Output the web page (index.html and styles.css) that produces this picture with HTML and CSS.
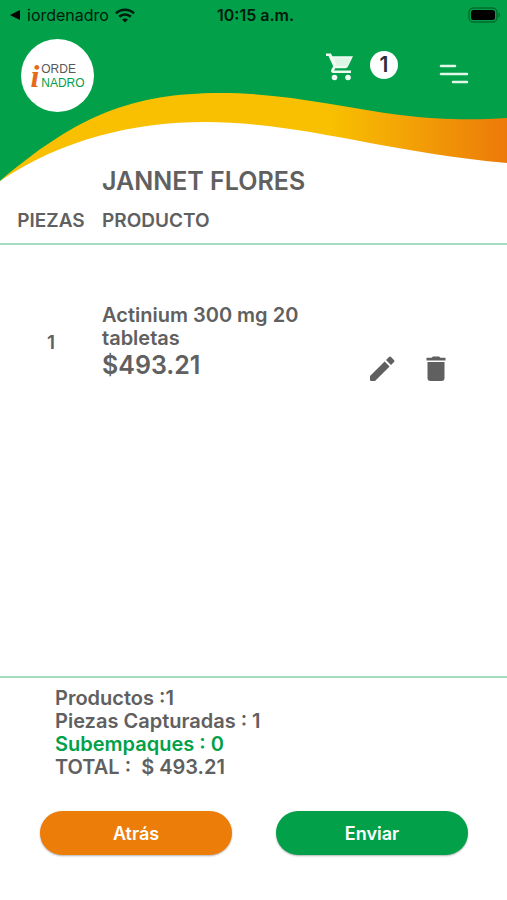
FILE: index.html
```html
<!DOCTYPE html>
<html lang="es">
<head>
<meta charset="utf-8">
<meta name="viewport" content="width=device-width, initial-scale=1">
<title>iordenadro</title>
<link rel="stylesheet" href="styles.css">
</head>
<body>
<header class="header">
  <svg class="wave" viewBox="0 0 507 182" preserveAspectRatio="none" aria-hidden="true">
    <defs>
      <linearGradient id="band" gradientUnits="userSpaceOnUse" x1="0" y1="0" x2="507" y2="0">
        <stop offset="0" stop-color="#f8c000"/>
        <stop offset=".65" stop-color="#f8c000"/>
        <stop offset=".8" stop-color="#f3a306"/>
        <stop offset="1" stop-color="#ec7a09"/>
      </linearGradient>
    </defs>
    <path fill="url(#band)" d="M0 181C62 139 135 122 205 122C301 122 384 152 507 163V80H0Z"/>
    <path fill="#02a149" d="M0 0H507V118C474 120 440 120 400 115C340 107 285 93 220 93C130 93 83 119 35 153C23 162 10 172 0 181Z"/>
  </svg>
  <div class="status">
    <div class="status-back">
      <svg width="11" height="12" viewBox="0 0 11 12" aria-hidden="true"><path d="M0 6L10 1V11Z"/></svg>
      <span>iordenadro</span>
      <svg width="20" height="15" viewBox="0 0 20 15" fill="none" stroke="#001c0c" stroke-width="2.6" aria-hidden="true"><path d="M1 5.4C6 .6 14 .6 19 5.4"/><path d="M4.2 8.8C7.5 5.7 12.5 5.7 15.8 8.8"/><path d="M10 14.5L7 11.5C8.6 10 11.4 10 13 11.5Z" fill="#001c0c" stroke="none"/></svg>
    </div>
    <time class="status-time">10:15 a.m.</time>
    <svg class="battery" width="33" height="16" viewBox="0 0 33 16" aria-hidden="true"><rect x="1" y="1" width="28" height="14" rx="4.5" fill="none" stroke="#006c2f" stroke-width="1.4"/><rect x="3" y="3" width="24" height="10" rx="2.5"/><path d="M30.5 5.5C32.5 6.2 32.5 9.8 30.5 10.5Z" fill="#006c2f"/></svg>
  </div>
  <div class="bar">
    <a class="logo" href="#" aria-label="iOrdenadro">
      <span class="logo-i">i</span>
      <span class="logo-words"><span>ORDE</span><span class="logo-green">NADRO</span></span>
    </a>
    <button class="cart" type="button" aria-label="Carrito">
      <svg width="28" height="28" viewBox="0 0 28 28" fill="#effaf2" aria-hidden="true"><path d="M0 .5H5L6.3 3.2H27L22 13.5Q21.2 15.2 19.5 15.2H9.3L8 17.5H25V20H7.5C5.4 20 4.4 18.2 5.4 16.4L7.2 13.2L2.5 3H0Z"/><path fill="#dff6e6" d="M7.8 5H25L20.7 13H10.8Z"/><circle cx="8.5" cy="24.5" r="2.8"/><circle cx="22" cy="24.5" r="2.8"/></svg>
      <span class="count">1</span>
    </button>
    <button class="menu" type="button" aria-label="Menú">
      <svg width="30" height="20" viewBox="0 0 30 20" fill="none" stroke="#dff6e8" stroke-width="2.6" stroke-linecap="round" aria-hidden="true"><path d="M2 2H16M2 10H28M14 18H28"/></svg>
    </button>
  </div>
</header>
<main class="order">
  <h1 class="client">JANNET FLORES</h1>
  <table class="items">
    <thead>
      <tr><th class="qty" scope="col">PIEZAS</th><th scope="col">PRODUCTO</th><td class="actions"></td></tr>
    </thead>
    <tbody>
      <tr>
        <td class="qty">1</td>
        <td class="product"><div>Actinium 300 mg 20 tabletas</div><div class="price">$493.21</div></td>
        <td class="actions">
          <div class="tools">
            <button type="button" aria-label="Editar"><svg width="26" height="26" viewBox="0 0 26 26" fill="#606060" aria-hidden="true"><path d="M1 20L15.6 5.4L20.6 10.4L6 25H2Q1 25 1 24ZM17 4L20 1Q21 0 22 1L25 4Q26 5 25 6L22 9Z"/></svg></button>
            <button type="button" aria-label="Eliminar"><svg width="20" height="26" viewBox="0 0 20 26" fill="#606060" aria-hidden="true"><path d="M.5 1.8H5.5L7 .5H13L14.500 1.800H19.500V4.400H.5ZM1.500 6H18.500V22Q18.500 25 15.500 25H4.500Q1.500 25 1.500 22Z"/></svg></button>
          </div>
        </td>
      </tr>
    </tbody>
  </table>
</main>
<footer class="footer">
  <div class="summary">
    <p>Productos :1</p>
    <p>Piezas Capturadas : 1</p>
    <p class="green">Subempaques : 0</p>
    <p>TOTAL :&nbsp; $ 493.21</p>
  </div>
  <div class="buttons">
    <button class="btn btn-back" type="button">Atrás</button>
    <button class="btn btn-send" type="button">Enviar</button>
  </div>
</footer>
</body>
</html>
```
FILE: styles.css
```css
* { box-sizing: border-box; }
body {
  margin: 0;
  min-height: 100vh;
  display: flex;
  flex-direction: column;
  background: #fff;
  color: #606060;
  font: 600 19px/23px Inter, "Liberation Sans", sans-serif;
}
button {
  padding: 0;
  border: 0;
  background: none;
  color: inherit;
  font: inherit;
  cursor: pointer;
}
svg { display: block; flex: none; }
p, h1 { margin: 0; }

.header { position: relative; isolation: isolate; }
.wave {
  position: absolute;
  z-index: -1;
  inset: 0 0 auto;
  width: 100%;
  height: 182px;
}
.status {
  display: grid;
  grid-template-columns: 1fr auto 1fr;
  align-items: center;
  height: 30px;
  padding: 0 6px 0 10px;
  color: #001c0c;
  font-size: 16px;
}
.status-back { display: flex; align-items: center; gap: 6px; font-weight: 400; }
.status-time { font-weight: 600; }
.battery { justify-self: end; }

.bar {
  display: flex;
  align-items: flex-start;
  padding: 9px 38px 0 21px;
}
.logo {
  display: flex;
  align-items: center;
  justify-content: center;
  gap: 2px;
  width: 73px;
  height: 73px;
  border-radius: 50%;
  background: #fff;
  color: #58585a;
  text-decoration: none;
}
.logo-i {
  color: #e56a1c;
  font: italic 700 32px/36px "Liberation Serif", serif;
}
.logo-words {
  display: flex;
  flex-direction: column;
  font: 400 12px/14px "Liberation Sans", sans-serif;
}
.logo-green { color: #02a149; }
.cart {
  display: flex;
  align-items: center;
  gap: 16px;
  margin: 10px 0 0 auto;
}
.cart svg { margin-top: 4px; }
.count {
  width: 28px;
  height: 28px;
  border-radius: 50%;
  background: #fff;
  color: #2c2c3a;
  font-size: 21px;
  line-height: 28px;
}
.menu { margin: 25px 0 0 41px; }

.order { flex: 1; padding-top: 54px; }
.client {
  padding-left: 102px;
  font-size: 25px;
  line-height: 30px;
  font-weight: 600;
}
.items {
  width: 100%;
  border-collapse: collapse;
  table-layout: fixed;
}
.items th, .items td { padding: 0; text-align: left; font-weight: 600; }
.items thead th { padding: 13px 0 11px; }
.items thead tr { border-bottom: 2px solid #a5dcc0; }
.items .qty { width: 102px; text-align: center; }
.items .actions { width: 184px; }
.items tbody td { padding-top: 57px; }
.items tbody .product { font-size: 20px; }
.product .price { font-size: 25px; line-height: 30px; }
.tools {
  display: flex;
  gap: 31px;
  padding: 54px 0 0 46px;
}

.footer { border-top: 2px solid #a5dcc0; padding-bottom: 45px; }
.summary { padding: 9px 55px 32px; font-size: 20px; }
.green { color: #02a149; }
.buttons { display: flex; gap: 44px; padding: 0 39px 0 40px; }
.btn {
  flex: 1;
  height: 44px;
  border-radius: 22px;
  color: #fff;
  font-size: 18px;
  box-shadow: 0 1px 2px rgba(0, 0, 0, .3);
}
.btn-back { background: #ed7d09; }
.btn-send { background: #02a149; }
```
